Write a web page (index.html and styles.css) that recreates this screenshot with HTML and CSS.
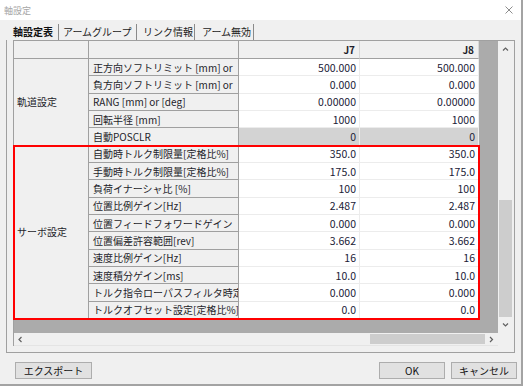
FILE: index.html
```html
<!DOCTYPE html>
<html lang="ja">

<head>
    <meta charset="UTF-8">
    <title>軸設定</title>
    <link rel="stylesheet" href="styles.css">
</head>

<body>
    <div class="window">
        <div class="titlebar">
            <span class="title">軸設定</span>
            <svg class="close" width="8" height="8" viewBox="0 0 8 8">
                <path d="M0.5 0.5 L7.5 7.5 M7.5 0.5 L0.5 7.5" stroke="#8c8c8c" stroke-width="1" fill="none" />
            </svg>
        </div>
        <div class="client">
            <ul class="tabs">
                <li class="tab active">軸設定表</li>
                <li class="tab">アームグループ</li>
                <li class="tab">リンク情報</li>
                <li class="tab">アーム無効</li>
            </ul>
            <div class="panel">
                <div class="grid">
                    <div class="grid-top">
                        <div class="view">
                            <div class="sheet">
                                <div class="hd"></div>
                                <div class="hd"></div>
                                <div class="hd num">J7</div>
                                <div class="hd num">J8</div>

                                <div class="group g1">軌道設定</div>
                                <div class="label">正方向ソフトリミット [mm] or</div>
                                <div class="val">500.000</div>
                                <div class="val">500.000</div>
                                <div class="label">負方向ソフトリミット [mm] or</div>
                                <div class="val">0.000</div>
                                <div class="val">0.000</div>
                                <div class="label">RANG [mm] or [deg]</div>
                                <div class="val">0.00000</div>
                                <div class="val">0.00000</div>
                                <div class="label">回転半径 [mm]</div>
                                <div class="val">1000</div>
                                <div class="val">1000</div>
                                <div class="label">自動POSCLR</div>
                                <div class="val ro">0</div>
                                <div class="val ro">0</div>

                                <div class="group g2">サーボ設定</div>
                                <div class="label">自動時トルク制限量[定格比%]</div>
                                <div class="val">350.0</div>
                                <div class="val">350.0</div>
                                <div class="label">手動時トルク制限量[定格比%]</div>
                                <div class="val">175.0</div>
                                <div class="val">175.0</div>
                                <div class="label">負荷イナーシャ比 [%]</div>
                                <div class="val">100</div>
                                <div class="val">100</div>
                                <div class="label">位置比例ゲイン[Hz]</div>
                                <div class="val">2.487</div>
                                <div class="val">2.487</div>
                                <div class="label">位置フィードフォワードゲイン</div>
                                <div class="val">0.000</div>
                                <div class="val">0.000</div>
                                <div class="label">位置偏差許容範囲[rev]</div>
                                <div class="val">3.662</div>
                                <div class="val">3.662</div>
                                <div class="label">速度比例ゲイン[Hz]</div>
                                <div class="val">16</div>
                                <div class="val">16</div>
                                <div class="label">速度積分ゲイン[ms]</div>
                                <div class="val">10.0</div>
                                <div class="val">10.0</div>
                                <div class="label">トルク指令ローパスフィルタ時定</div>
                                <div class="val">0.000</div>
                                <div class="val">0.000</div>
                                <div class="label">トルクオフセット設定[定格比%]</div>
                                <div class="val">0.0</div>
                                <div class="val">0.0</div>
                            </div>
                        </div>
                        <div class="vscroll">
                            <svg class="arrow" width="16" height="16" viewBox="0 0 16 16">
                                <path d="M5 9.5 L7.5 7 L10 9.5" stroke="#606060" stroke-width="1.2" fill="none" />
                            </svg>
                            <div class="vtrack">
                                <div class="vthumb"></div>
                            </div>
                            <svg class="arrow" width="16" height="16" viewBox="0 0 16 16">
                                <path d="M5 6.5 L7.5 9 L10 6.5" stroke="#606060" stroke-width="1.2" fill="none" />
                            </svg>
                        </div>
                    </div>
                    <div class="grid-bottom">
                        <div class="hscroll">
                            <svg class="harrow" width="13" height="13" viewBox="0 0 13 13">
                                <path d="M7.5 4 L5 6.5 L7.5 9" stroke="#606060" stroke-width="1.2" fill="none" />
                            </svg>
                            <div class="htrack">
                                <div class="hthumb"></div>
                            </div>
                            <svg class="harrow" width="13" height="13" viewBox="0 0 13 13">
                                <path d="M5 4 L7.5 6.5 L5 9" stroke="#606060" stroke-width="1.2" fill="none" />
                            </svg>
                        </div>
                        <div class="corner"></div>
                    </div>
                    <div class="highlight"></div>
                </div>
            </div>
            <div class="buttons">
                <button class="btn export">エクスポート</button>
                <span class="spacer"></span>
                <button class="btn">OK</button>
                <button class="btn">キャンセル</button>
            </div>
        </div>
    </div>
</body>

</html>
```

FILE: styles.css
```css
* {
    margin: 0;
    padding: 0;
    box-sizing: border-box;
}

body {
    background-color: #ffffff;
    font-family: "Noto Sans CJK JP", "Noto Sans", sans-serif;
    font-size: 10px;
    color: #1e1e2a;
}

.window {
    width: 523px;
    height: 386px;
    background-color: #f0f0f0;
    border-right: 2px solid #a3a3a3;
    border-bottom: 2px solid #a3a3a3;
}

.titlebar {
    height: 20px;
    background-color: #ffffff;
    display: flex;
    align-items: center;
    justify-content: space-between;
    padding: 0 8px 0 4px;
}

.title {
    color: #a6a6a6;
    font-size: 9px;
}

/* tabs */

.tabs {
    list-style: none;
    display: flex;
    height: 16px;
    margin-top: 4px;
    padding-left: 11px;
}

.tab {
    height: 16px;
    line-height: 16px;
    padding-left: 4px;
    border-right: 1px solid #8a8a8a;
    white-space: nowrap;
    color: #222;
}

.tab:nth-child(1) { width: 48px; padding-left: 2px; }
.tab:nth-child(2) { width: 78px; }
.tab:nth-child(3) { width: 58px; padding-left: 6px; }
.tab:nth-child(4) { width: 59px; padding-left: 7px; }

.tab.active {
    font-weight: bold;
    color: #111;
}

.panel {
    width: 509px;
    margin-left: 6px;
    border: 1px solid #a0a0a0;
    border-top: none;
    padding: 0 0 6px 6px;
}

/* data grid */

.grid {
    position: relative;
    width: 501px;
    height: 306px;
    border-left: 1px solid #a0a0a0;
    border-top: 1px solid #a0a0a0;
    display: flex;
    flex-direction: column;
}

.grid-top {
    display: flex;
    height: 292px;
}

.view {
    width: 484px;
    background-color: #ababab;
    overflow: hidden;
}

.sheet {
    display: grid;
    grid-template-columns: 75px 150px 121px 119px;
    grid-template-rows: 18px;
    grid-auto-rows: 17.33px;
}

.sheet > div {
    border-right: 1px solid #a0a0a0;
    border-bottom: 1px solid #a0a0a0;
    white-space: nowrap;
    overflow: hidden;
    display: flex;
    align-items: center;
}

.hd {
    background-color: #f0f0f0;
    padding: 0 4px;
}

.hd.num {
    justify-content: flex-end;
    font-weight: bold;
    font-size: 10px;
    border-right-color: #d8d8d8;
}

.group {
    grid-column: 1;
    background-color: #f0f0f0;
    padding-left: 3px;
}

.g1 { grid-row: 2 / span 5; }
.g2 { grid-row: 7 / span 10; }

.sheet > .label {
    background-color: #f0f0f0;
    padding-left: 4px;
}

.sheet > .val {
    background-color: #ffffff;
    border-right-color: #ececec;
    border-bottom-color: #ececec;
    justify-content: flex-end;
    padding-right: 3px;
    font-size: 10.5px;
    color: #202036;
}

.sheet > .val.ro {
    background-color: #d3d3d3;
    border-bottom-color: #d3d3d3;
}

.vscroll {
    width: 16px;
    display: flex;
    flex-direction: column;
    background-color: #f0f0f0;
}

.arrow {
    display: block;
}

.vtrack {
    flex: 1;
    position: relative;
}

.vthumb {
    position: absolute;
    left: 1px;
    right: 2px;
    top: 143px;
    bottom: 0;
    background-color: #cdcdcd;
}

.grid-bottom {
    display: flex;
    height: 13px;
}

.hscroll {
    width: 484px;
    display: flex;
    background-color: #f0f0f0;
    border-bottom: 1px solid #e4e4e4;
}

.harrow {
    display: block;
    flex: none;
}

.htrack {
    flex: 1;
    position: relative;
}

.hthumb {
    position: absolute;
    top: 1px;
    bottom: 1px;
    left: 343px;
    right: 0;
    background-color: #cdcdcd;
}

.corner {
    width: 16px;
    background-color: #f0f0f0;
}

/* red marking over the servo rows */
.highlight {
    position: absolute;
    left: -1px;
    top: 104px;
    width: 467px;
    height: 175px;
    border: 2px solid #ff0000;
}

/* buttons */

.buttons {
    display: flex;
    gap: 6px;
    margin-top: 9px;
    padding-left: 15px;
}

.spacer {
    flex: 1;
}

.btn {
    height: 17px;
    width: 66px;
    background-color: #e1e1e1;
    border: 1px solid #adadad;
    font-family: "Noto Sans CJK JP", "Noto Sans", sans-serif;
    font-size: 10px;
    color: #111;
    line-height: 15px;
}

.btn.export {
    width: 77px;
}

.buttons .btn:last-child {
    margin-right: 4px;
}
```
